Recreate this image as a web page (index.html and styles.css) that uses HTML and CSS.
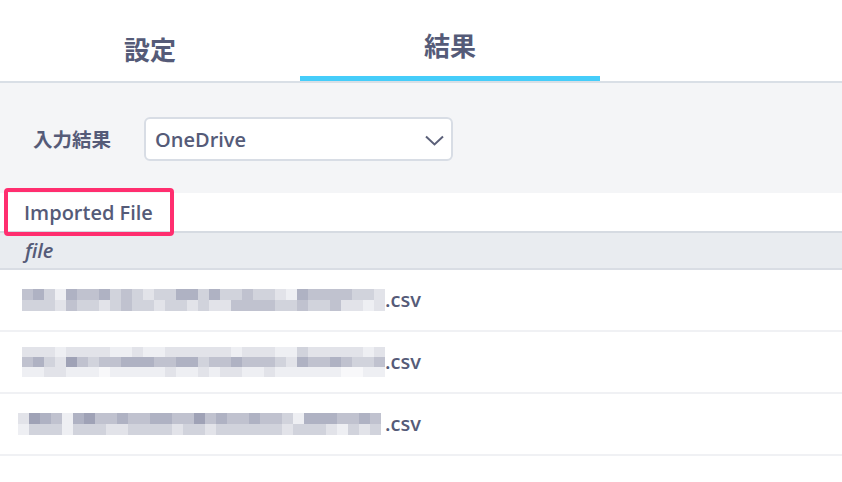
FILE: index.html
```html
<!DOCTYPE html>
<html lang="ja">
<head>
<meta charset="utf-8">
<link rel="stylesheet" href="styles.css">
</head>
<body>
<div class="tabs">
  <div class="tab">設定</div>
  <div class="tab active">結果</div>
</div>
<div class="form">
  <span class="label">入力結果</span>
  <div class="select">
    <span>OneDrive</span>
    <svg class="chev" width="19" height="11" viewBox="0 0 19 11"><path d="M1 1.5 L9.5 9.5 L18 1.5" fill="none" stroke="#5b6079" stroke-width="2"/></svg>
  </div>
</div>
<div class="section">
  <span>Imported File</span>
  <div class="mark"></div>
</div>
<div class="thead">file</div>
<div class="row">
  <div class="mosaic r1">
    <div class="strip"><i class="s3"></i><i class="s2"></i><i class="s4"></i><i class="s6"></i><i class="s2"></i><i class="s3"></i><i class="s3"></i><i class="s2"></i><i class="s4"></i><i class="s3"></i><i class="s4"></i><i class="s5"></i><i class="s4"></i><i class="s4"></i><i class="s2"></i><i class="s2"></i><i class="s4"></i><i class="s2"></i><i class="s4"></i><i class="s4"></i><i class="s3"></i><i class="s4"></i><i class="s4"></i><i class="s5"></i><i class="s6"></i><i class="s2"></i><i class="s3"></i><i class="s3"></i><i class="s3"></i><i class="s3"></i><i class="s4"></i><i class="s4"></i><i class="s5"></i></div>
    <div class="strip"><i class="s4"></i><i class="s4"></i><i class="s4"></i><i class="s5"></i><i class="s3"></i><i class="s4"></i><i class="s4"></i><i class="s5"></i><i class="s4"></i><i class="s3"></i><i class="s4"></i><i class="s4"></i><i class="s5"></i><i class="s4"></i><i class="s4"></i><i class="s5"></i><i class="s4"></i><i class="s5"></i><i class="s5"></i><i class="s3"></i><i class="s3"></i><i class="s3"></i><i class="s3"></i><i class="s4"></i><i class="s4"></i><i class="s3"></i><i class="s4"></i><i class="s4"></i><i class="s3"></i><i class="s5"></i><i class="s5"></i><i class="s6"></i><i class="s5"></i></div>
  </div>
  <span class="ext">.csv</span>
</div>
<div class="row">
  <div class="mosaic r2">
    <div class="strip"><i class="s5"></i><i class="s5"></i><i class="s5"></i><i class="s6"></i><i class="s5"></i><i class="s5"></i><i class="s5"></i><i class="s5"></i><i class="s6"></i><i class="s6"></i><i class="s5"></i><i class="s6"></i><i class="s6"></i><i class="s5"></i><i class="s5"></i><i class="s5"></i><i class="s5"></i><i class="s5"></i><i class="s5"></i><i class="s6"></i><i class="s5"></i><i class="s5"></i><i class="s5"></i><i class="s6"></i><i class="s6"></i><i class="s4"></i><i class="s5"></i><i class="s5"></i><i class="s5"></i><i class="s5"></i><i class="s5"></i><i class="s6"></i><i class="s5"></i></div>
    <div class="strip"><i class="s3"></i><i class="s2"></i><i class="s4"></i><i class="s5"></i><i class="s1"></i><i class="s3"></i><i class="s4"></i><i class="s3"></i><i class="s3"></i><i class="s2"></i><i class="s2"></i><i class="s2"></i><i class="s3"></i><i class="s3"></i><i class="s2"></i><i class="s2"></i><i class="s4"></i><i class="s3"></i><i class="s3"></i><i class="s2"></i><i class="s3"></i><i class="s3"></i><i class="s3"></i><i class="s4"></i><i class="s5"></i><i class="s2"></i><i class="s3"></i><i class="s3"></i><i class="s2"></i><i class="s3"></i><i class="s4"></i><i class="s4"></i><i class="s3"></i></div>
    <div class="strip"><i class="s6"></i><i class="s6"></i><i class="s5"></i><i class="s5"></i><i class="s6"></i><i class="s6"></i><i class="s6"></i><i class="s7"></i><i class="s6"></i><i class="s6"></i><i class="s6"></i><i class="s6"></i><i class="s6"></i><i class="s5"></i><i class="s6"></i><i class="s6"></i><i class="s5"></i><i class="s6"></i><i class="s5"></i><i class="s5"></i><i class="s6"></i><i class="s6"></i><i class="s5"></i><i class="s6"></i><i class="s6"></i><i class="s6"></i><i class="s6"></i><i class="s6"></i><i class="s6"></i><i class="s7"></i><i class="s7"></i><i class="s6"></i><i class="s6"></i></div>
  </div>
  <span class="ext">.csv</span>
</div>
<div class="row">
  <div class="mosaic r3">
    <div class="strip"><i class="s5"></i><i class="s1"></i><i class="s2"></i><i class="s3"></i><i class="s6"></i><i class="s2"></i><i class="s1"></i><i class="s3"></i><i class="s3"></i><i class="s2"></i><i class="s3"></i><i class="s3"></i><i class="s2"></i><i class="s2"></i><i class="s3"></i><i class="s3"></i><i class="s1"></i><i class="s3"></i><i class="s2"></i><i class="s3"></i><i class="s3"></i><i class="s2"></i><i class="s3"></i><i class="s3"></i><i class="s4"></i><i class="s6"></i><i class="s2"></i><i class="s2"></i><i class="s2"></i><i class="s3"></i><i class="s3"></i><i class="s2"></i><i class="s3"></i></div>
    <div class="strip"><i class="s6"></i><i class="s4"></i><i class="s4"></i><i class="s4"></i><i class="s6"></i><i class="s4"></i><i class="s4"></i><i class="s4"></i><i class="s5"></i><i class="s5"></i><i class="s4"></i><i class="s4"></i><i class="s4"></i><i class="s4"></i><i class="s5"></i><i class="s4"></i><i class="s4"></i><i class="s5"></i><i class="s4"></i><i class="s4"></i><i class="s4"></i><i class="s4"></i><i class="s4"></i><i class="s4"></i><i class="s5"></i><i class="s4"></i><i class="s4"></i><i class="s4"></i><i class="s5"></i><i class="s6"></i><i class="s4"></i><i class="s5"></i><i class="s4"></i></div>
  </div>
  <span class="ext">.csv</span>
</div>
</body>
</html>
```

FILE: styles.css
```css
* { box-sizing: border-box; }
html, body { margin: 0; background: #fff; }
body {
  font-family: "Open Sans", "Noto Sans CJK JP", sans-serif;
  color: #555b78;
  width: 842px;
  height: 482px;
  overflow: hidden;
}
.tabs {
  display: flex;
  height: 83px;
  border-bottom: 2px solid #d9dfe6;
}
.tab {
  width: 300px;
  height: 81px;
  display: flex;
  justify-content: center;
  align-items: flex-start;
  padding-top: 36px;
  font-family: "Noto Sans CJK JP", sans-serif;
  font-weight: 700;
  font-size: 26px;
  line-height: 26px;
  border-bottom: 5px solid transparent;
}
.tab.active {
  padding-top: 32px;
  border-bottom-color: #45cdfa;
}
.form {
  background: #f4f5f7;
  height: 110px;
  display: flex;
  align-items: center;
  padding: 0 0 0 33px;
  gap: 33px;
}
.label {
  font-family: "Noto Sans CJK JP", sans-serif;
  font-weight: 700;
  font-size: 19.5px;
  width: 78px;
  white-space: nowrap;
}
.select {
  width: 309px;
  height: 44px;
  margin-top: 2px;
  background: #fff;
  border: 2px solid #d8dde5;
  border-radius: 6px;
  display: flex;
  align-items: center;
  justify-content: space-between;
  padding: 0 7px 0 9px;
  font-size: 20px;
  font-weight: 600;
}
.chev { margin-top: 2px; }
.section {
  position: relative;
  height: 38px;
  display: flex;
  align-items: center;
  padding-left: 24px;
  font-size: 20px;
  font-weight: 600;
  background: #fff;
}
.mark {
  position: absolute;
  left: 4px;
  top: -5px;
  width: 170px;
  height: 48px;
  border: 4px solid #ff2e6f;
  border-radius: 4px;
}
.thead {
  height: 39px;
  background: #e9ecf0;
  border-top: 2px solid #d6dbe2;
  border-bottom: 2px solid #d9dde4;
  display: flex;
  align-items: center;
  padding-left: 25px;
  font-size: 20px;
  font-weight: 600;
  font-style: italic;
}
.row {
  height: 62px;
  border-bottom: 2px solid #f0f1f4;
  display: flex;
  align-items: center;
  padding-left: 22px;
}
.mosaic { display: flex; flex-direction: column; }
.strip { display: flex; }
.strip i { display: block; width: 11px; height: 11px; }
.r2 .strip i { height: 10px; }
.r3 { margin-left: -4px; margin-right: 4px; }
.ext {
  font-size: 20px;
  font-weight: 600;
  margin-top: -2px;
}
.s1 { background: #9fa2b6; }
.s2 { background: #afb2c3; }
.s3 { background: #c0c2cf; }
.s4 { background: #d1d3dc; }
.s5 { background: #e2e3e9; }
.s6 { background: #eeeff3; }
.s7 { background: #f8f8fa; }
```
